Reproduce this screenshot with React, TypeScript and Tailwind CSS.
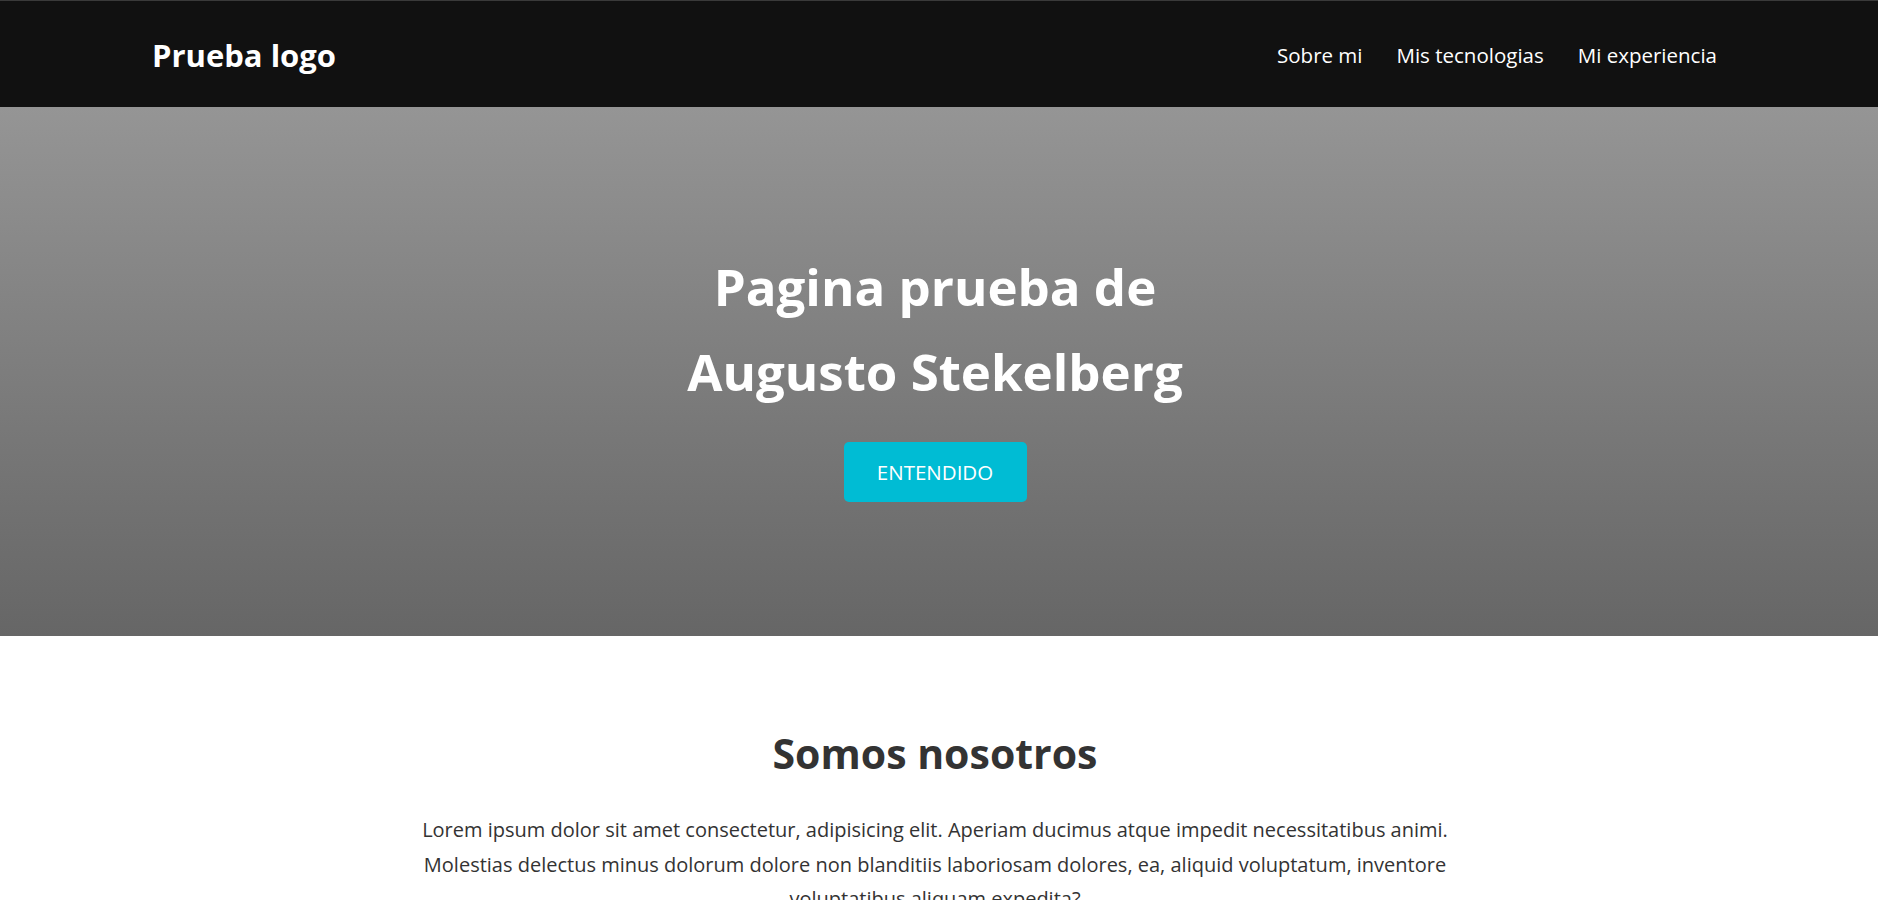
import React from "react";

export default function App() {
  const font = { fontFamily: '"Open Sans", "Noto Sans", sans-serif' };
  return (
    <div className="min-h-screen bg-white text-[#333]" style={font}>
      <nav className="h-[107px] bg-[#111111] border-t border-[#3a3a3a] flex items-center justify-between pl-[152px] pr-[161px] pt-[2px]">
        <div className="text-white font-bold text-[31px] leading-none">Prueba logo</div>
        <ul className="flex items-center gap-[34px] text-white text-[20.5px]">
          <li>Sobre mi</li>
          <li>Mis tecnologias</li>
          <li>Mi experiencia</li>
        </ul>
      </nav>
      <header className="h-[529px] bg-gradient-to-b from-[#959595] to-[#666666] flex flex-col items-center pt-[137px] pr-[8px]">
        <h1 className="text-white font-bold text-[51px] leading-[85px] text-center">
          Pagina prueba de
          <br />
          Augusto Stekelberg
        </h1>
        <button className="mt-[28px] h-[60px] w-[183px] rounded-[5px] bg-[#00bcd4] text-white text-[20.5px]">
          ENTENDIDO
        </button>
      </header>
      <section className="flex flex-col items-center pt-[83px] pr-[8px]">
        <h2 className="font-bold text-[41px] leading-[68px] text-[#333]">Somos nosotros</h2>
        <p className="mt-[26px] text-[20px] leading-[34.5px] text-center text-[#333]">
          <span className="block whitespace-nowrap">Lorem ipsum dolor sit amet consectetur, adipisicing elit. Aperiam ducimus atque impedit necessitatibus animi.</span>
          <span className="block whitespace-nowrap">Molestias delectus minus dolorum dolore non blanditiis laboriosam dolores, ea, aliquid voluptatum, inventore</span>
          <span className="block whitespace-nowrap">voluptatibus aliquam expedita?</span>
        </p>
      </section>
    </div>
  );
}
